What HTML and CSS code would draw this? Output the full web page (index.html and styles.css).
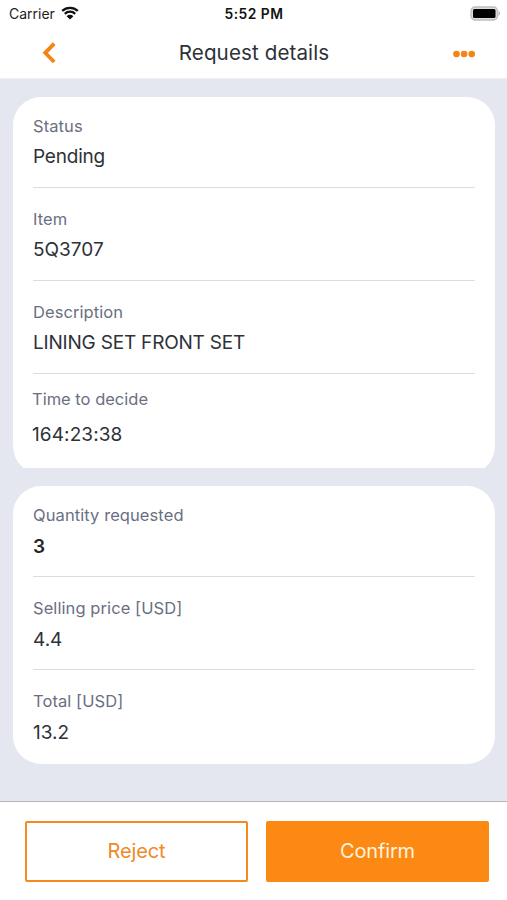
FILE: index.html
```html
<!DOCTYPE html>
<html lang="en">
<head>
<meta charset="utf-8">
<title>Request details</title>
<link rel="stylesheet" href="styles.css">
</head>
<body>
<div class="statusbar">
  <div class="carrier"><span>Carrier</span>
    <svg class="wifi" width="18" height="14" viewBox="0 0 18 14"><path d="M1.2 4.9a11.3 11.3 0 0 1 15.6 0M3.8 7.8a7.5 7.5 0 0 1 10.4 0" fill="none" stroke="#111" stroke-width="2.3"/><path d="M9 13.6 5.6 10.2a4.9 4.9 0 0 1 6.8 0z" fill="#111"/></svg>
  </div>
  <div class="clock">5:52 PM</div>
  <svg class="battery" width="31" height="16" viewBox="0 0 31 16"><rect x="1" y="1" width="26.5" height="13" rx="4" fill="#ddd" stroke="#bdbdbd" stroke-width="1.3"/><rect x="3" y="3" width="22.5" height="9" rx="1.5" fill="#000"/><path d="M28.6 4.8q2.6 2.7 0 5.4z" fill="#aaa"/></svg>
</div>
<header class="navbar">
  <svg class="back" width="16" height="24" viewBox="0 0 16 24"><path d="M14.2 2.6 5.2 11.8l9 9.2" fill="none" stroke="#f58416" stroke-width="3.8"/></svg>
  <h1>Request details</h1>
  <svg class="more" width="24" height="8" viewBox="0 0 24 8" fill="#f58416"><circle cx="3.5" cy="4" r="3.3"/><circle cx="11.1" cy="4" r="3.3"/><circle cx="18.7" cy="4" r="3.3"/></svg>
</header>
<main class="content">
  <div class="clip">
    <section class="card card-main">
      <div class="row"><div class="label">Status</div><div class="value word">Pending</div></div>
      <div class="row"><div class="label">Item</div><div class="value">5Q3707</div></div>
      <div class="row"><div class="label">Description</div><div class="value word">LINING SET FRONT SET</div></div>
      <div class="row timer"><div class="label">Time to decide</div><div class="value">164:23:38</div></div>
    </section>
  </div>
  <section class="card card-amounts">
    <div class="row"><div class="label">Quantity requested</div><div class="value strong">3</div></div>
    <div class="row"><div class="label">Selling price [USD]</div><div class="value">4.4</div></div>
    <div class="row"><div class="label">Total [USD]</div><div class="value">13.2</div></div>
  </section>
</main>
<footer class="actions">
  <button class="btn reject">Reject</button>
  <button class="btn confirm">Confirm</button>
</footer>
</body>
</html>
```
FILE: styles.css
```css
* { box-sizing: border-box; }
body {
  margin: 0;
  height: 900px;
  overflow: hidden;
  display: flex;
  flex-direction: column;
  background: #fff;
  color: #2e3138;
  font-family: Inter, sans-serif;
}
.statusbar {
  height: 27px;
  display: grid;
  grid-template-columns: 1fr auto 1fr;
  align-items: center;
  padding: 0 6px 0 9px;
}
.carrier { display: flex; align-items: center; gap: 6px; font-size: 14px; letter-spacing: 0; color: #222; }
.wifi { margin-top: -1px; }
.clock { margin-right: 2px; font-size: 13.8px; font-weight: 600; letter-spacing: 0.5px; color: #111; }
.battery { justify-self: end; }
.navbar {
  height: 51px;
  display: grid;
  grid-template-columns: 1fr auto 1fr;
  align-items: center;
  padding: 0 30px 0 40px;
}
.navbar h1 { margin: 0 9px 0 0; font-size: 20.6px; line-height: 24px; font-weight: 400; letter-spacing: 0.1px; }
.more { justify-self: end; margin-top: 2px; }
.content {
  height: 723px;
  padding: 17.5px 12.5px 0 13px;
  background: #e4e7f0;
  border-top: 1px solid #eef0f5;
}
.clip { height: 371px; overflow: hidden; margin-bottom: 18.5px; }
.card { height: 278px; padding: 0 20px; border-radius: 28px; background: #fff; }
.card-main { height: 377px; }
.row { height: 93px; padding-top: 21px; border-bottom: 1px solid #d9dce1; }
.row:first-child { height: 91px; padding-top: 19px; }
.row:last-child { border-bottom: 0; }
.label { font-size: 16.5px; line-height: 20px; letter-spacing: 0.08px; color: #6a7082; }
.value { margin-top: 9px; font-size: 19px; line-height: 24px; }
.card-amounts .value { margin-top: 9.5px; }
.word { letter-spacing: -0.2px; }
.strong { font-weight: 600; color: #22252a; }
.timer { padding-top: 15px; margin-left: -1px; }
.timer .label { letter-spacing: 0; }
.timer .value { margin-top: 14px; letter-spacing: 0.1px; }
.actions {
  flex: 1;
  display: grid;
  grid-template-columns: 1fr 1fr;
  gap: 18px;
  padding: 19px 18px 18px 25px;
  border-top: 1px solid #b3b5ba;
}
.btn {
  height: 61px;
  padding: 0 0 1px;
  border: 2px solid #f58a1c;
  border-radius: 2px;
  font: 400 20px/24px Inter, sans-serif;
  letter-spacing: -0.15px;
}
.reject { background: #fff; color: #ee8a28; }
.confirm { background: #fc8914; border-color: #fc8914; color: #fff3df; }
```
